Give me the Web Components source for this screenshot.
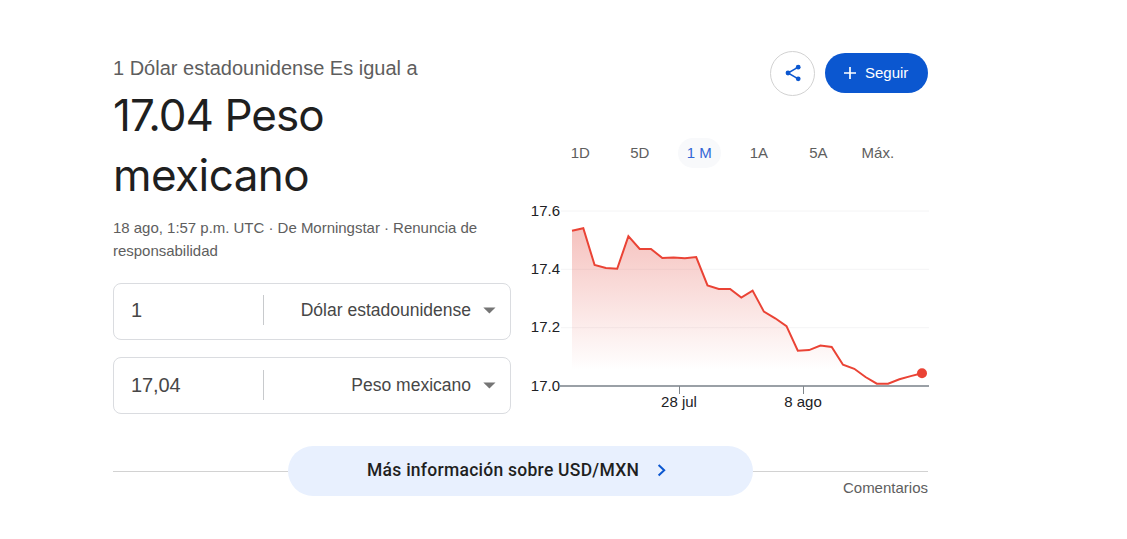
<!DOCTYPE html>
<html lang="es">
<head>
<meta charset="UTF-8">
<title>USD/MXN</title>
<style>
    body {
        margin: 0;
        background: #fff;
        font-family: "Liberation Sans", Arial, sans-serif;
    }
</style>
</head>
<body>
<currency-card></currency-card>

<script>
class CurrencyField extends HTMLElement {
    connectedCallback() {
        this.attachShadow({ mode: 'open' });
        this.shadowRoot.innerHTML = `
            <style>
                :host {
                    display: flex;
                    align-items: center;
                    box-sizing: border-box;
                    height: 57px;
                    border: 1px solid #dadce0;
                    border-radius: 8px;
                    color: #474747;
                }
                .amount {
                    box-sizing: border-box;
                    width: 150px;
                    height: 30px;
                    line-height: 30px;
                    padding-left: 17px;
                    border-right: 1px solid #c8cacd;
                    font-size: 20px;
                    letter-spacing: -0.1px;
                    margin-bottom: 3px;
                }
                .unit {
                    flex: 1;
                    text-align: right;
                    font-size: 17.5px;
                    line-height: 24px;
                    margin-bottom: 3px;
                }
                svg {
                    margin: 0 14px 2px 12px;
                }
            </style>
            <div class="amount">${this.getAttribute('amount')}</div>
            <div class="unit"><slot></slot></div>
            <svg width="13" height="7"><path d="M0.3 0.4h12.2L6.4 6.6z" fill="#757575"/></svg>
        `;
    }
}
customElements.define('currency-field', CurrencyField);

class ShareButton extends HTMLElement {
    connectedCallback() {
        this.attachShadow({ mode: 'open' });
        this.shadowRoot.innerHTML = `
            <style>
                :host {
                    display: flex;
                    align-items: center;
                    justify-content: center;
                    box-sizing: border-box;
                    width: 45px;
                    height: 45px;
                    padding-bottom: 1px;
                    border: 1px solid #d2d2d2;
                    border-radius: 50%;
                }
            </style>
            <svg width="18" height="18" viewBox="0 0 18 18" fill="#0b57d0">
                <path d="M14.2 3.2 4 9l10.2 5.8" fill="none" stroke="#0b57d0" stroke-width="1.5"/>
                <circle cx="14.2" cy="3.2" r="2.4"/>
                <circle cx="4" cy="9" r="2.4"/>
                <circle cx="14.2" cy="14.8" r="2.4"/>
            </svg>
        `;
    }
}
customElements.define('share-button', ShareButton);

class FollowButton extends HTMLElement {
    connectedCallback() {
        this.attachShadow({ mode: 'open' });
        this.shadowRoot.innerHTML = `
            <style>
                :host {
                    display: flex;
                    align-items: center;
                    box-sizing: border-box;
                    width: 103px;
                    height: 40px;
                    padding-left: 19px;
                    gap: 9px;
                    border-radius: 20px;
                    background: #0b57d0;
                    color: #fff;
                    font-size: 15px;
                }
                span {
                    margin-bottom: 2px;
                }
            </style>
            <svg width="12" height="12"><path d="M6 0v12M0 6h12" stroke="#fff" stroke-width="1.7"/></svg>
            <span><slot></slot></span>
        `;
    }
}
customElements.define('follow-button', FollowButton);

class RangeTabs extends HTMLElement {
    connectedCallback() {
        const tabs = ['1D', '5D', '1 M', '1A', '5A', 'Máx.'];
        this.attachShadow({ mode: 'open' });
        this.shadowRoot.innerHTML = `
            <style>
                :host {
                    display: flex;
                    font-size: 15px;
                    line-height: 30px;
                    color: #5e5e5e;
                }
                .tab {
                    display: flex;
                    justify-content: center;
                    width: 59.5px;
                }
                span {
                    padding: 0 9px;
                    border-radius: 15px;
                }
                .active span {
                    background: #f8f9fb;
                    color: #3367d6;
                }
            </style>
            ${tabs.map(t => `<div class="tab ${t === '1 M' ? 'active' : ''}"><span>${t}</span></div>`).join('')}
        `;
    }
}
customElements.define('range-tabs', RangeTabs);

class RateChart extends HTMLElement {
    connectedCallback() {
        const rates = [
            17.532, 17.541, 17.415, 17.405, 17.402, 17.514, 17.47, 17.47,
            17.439, 17.441, 17.438, 17.442, 17.345, 17.333, 17.333, 17.303,
            17.327, 17.255, 17.232, 17.205, 17.121, 17.123, 17.139, 17.134,
            17.073, 17.059, 17.031, 17.008, 17.008, 17.023, 17.034, 17.044
        ];
        const left = 47;
        const step = 11.29;
        const y = rate => 16 + (17.6 - rate) * 291.67;
        const points = rates.map((r, i) => `${(left + i * step).toFixed(1)},${y(r).toFixed(1)}`);
        const right = left + step * (rates.length - 1);

        this.attachShadow({ mode: 'open' });
        this.shadowRoot.innerHTML = `
            <style>
                :host {
                    display: block;
                }
                svg {
                    display: block;
                }
                text {
                    font-size: 15px;
                    fill: #202124;
                }
            </style>
            <svg width="404" height="225">
                <defs>
                    <linearGradient id="fade" x1="0" y1="33" x2="0" y2="191" gradientUnits="userSpaceOnUse">
                        <stop offset="0" stop-color="#e24a40" stop-opacity="0.34"/>
                        <stop offset="0.9" stop-color="#e24a40" stop-opacity="0"/>
                    </linearGradient>
                </defs>
                ${[17.6, 17.4, 17.2].map(v => `<path d="M36 ${y(v).toFixed(1)}H404" stroke="#f4f4f5"/>`).join('')}
                <path d="M${left},191L${points.join('L')}V191z" fill="url(#fade)"/>
                <path d="M35 191H404" stroke="#9aa0a6" stroke-width="2"/>
                <path d="M154.5 191v8M278.5 191v8" stroke="#80868b"/>
                <polyline points="${points.join(' ')}" fill="none" stroke="#ea4335" stroke-width="2"/>
                <circle cx="${right}" cy="${y(17.044)}" r="5" fill="#ea4335"/>
                ${[17.6, 17.4, 17.2, 17].map(v => `<text x="35" y="${Math.floor(y(v) + 0.1) + 5}" text-anchor="end">${v.toFixed(1)}</text>`).join('')}
                <text x="154" y="212" text-anchor="middle">28 jul</text>
                <text x="278" y="212" text-anchor="middle">8 ago</text>
            </svg>
        `;
    }
}
customElements.define('rate-chart', RateChart);

class MoreLink extends HTMLElement {
    connectedCallback() {
        this.attachShadow({ mode: 'open' });
        this.shadowRoot.innerHTML = `
            <style>
                :host {
                    display: flex;
                    align-items: center;
                }
                .line {
                    flex: 1;
                    height: 1px;
                    background: #d2d2d2;
                }
                .pill {
                    display: flex;
                    align-items: center;
                    box-sizing: border-box;
                    width: 465px;
                    height: 50px;
                    padding-left: 79px;
                    border-radius: 25px;
                    background: #e8f0fe;
                    color: #1f1f1f;
                    font: 500 17.5px/24px Roboto, sans-serif;
                    letter-spacing: 0.26px;
                }
                .label {
                    width: 290px;
                    margin-bottom: 2px;
                    white-space: nowrap;
                }
                svg {
                    margin-bottom: 1px;
                }
            </style>
            <div class="line"></div>
            <div class="pill">
                <span class="label"><slot></slot></span>
                <svg width="9" height="13"><path d="M1.6 0.9 7.2 6.2 1.6 11.5" fill="none" stroke="#0b57d0" stroke-width="2"/></svg>
            </div>
            <div class="line"></div>
        `;
    }
}
customElements.define('more-link', MoreLink);

class CurrencyCard extends HTMLElement {
    connectedCallback() {
        this.attachShadow({ mode: 'open' });
        this.shadowRoot.innerHTML = `
            <style>
                :host {
                    display: block;
                    width: 816px;
                    padding: 51px 0 0 113px;
                }
                .columns {
                    display: flex;
                    justify-content: space-between;
                    height: 395px;
                }
                .left {
                    width: 398px;
                }
                .right {
                    width: 404px;
                }
                .base {
                    margin-top: 4px;
                    font-size: 20px;
                    line-height: 26px;
                    color: #5e5e5e;
                }
                .result {
                    margin-top: 4px;
                    font: 400 44px/60px Inter, sans-serif;
                    color: #1f1f1f;
                }
                .result div {
                    white-space: nowrap;
                }
                .value {
                    letter-spacing: -1px;
                }
                .name {
                    letter-spacing: -0.55px;
                }
                .source {
                    margin: 11px 0 21px;
                    font-size: 15px;
                    line-height: 23px;
                    letter-spacing: -0.02px;
                    color: #5e5e5e;
                }
                currency-field + currency-field {
                    margin-top: 17px;
                    padding-top: 2px;
                }
                .actions {
                    display: flex;
                    justify-content: flex-end;
                    gap: 10px;
                    padding-right: 1px;
                }
                range-tabs {
                    margin: 42px 0 27px 25.6px;
                }
                more-link {
                    width: 815px;
                }
                .feedback {
                    width: 815px;
                    margin-top: -17px;
                    text-align: right;
                    font-size: 15px;
                    line-height: 18px;
                    color: #5e5e5e;
                }
            </style>
            <div class="columns">
                <div class="left">
                    <div class="base">1 Dólar estadounidense Es igual a</div>
                    <div class="result">
                        <div class="value">17.04 Peso</div>
                        <div class="name">mexicano</div>
                    </div>
                    <div class="source">18 ago, 1:57 p.m. UTC · De Morningstar · Renuncia de responsabilidad</div>
                    <currency-field amount="1">Dólar estadounidense</currency-field>
                    <currency-field amount="17,04">Peso mexicano</currency-field>
                </div>
                <div class="right">
                    <div class="actions">
                        <share-button></share-button>
                        <follow-button style="margin-top: 2px">Seguir</follow-button>
                    </div>
                    <range-tabs></range-tabs>
                    <rate-chart></rate-chart>
                </div>
            </div>
            <more-link>Más información sobre USD/MXN</more-link>
            <div class="feedback">Comentarios</div>
        `;
    }
}
customElements.define('currency-card', CurrencyCard);
</script>
</body>
</html>
